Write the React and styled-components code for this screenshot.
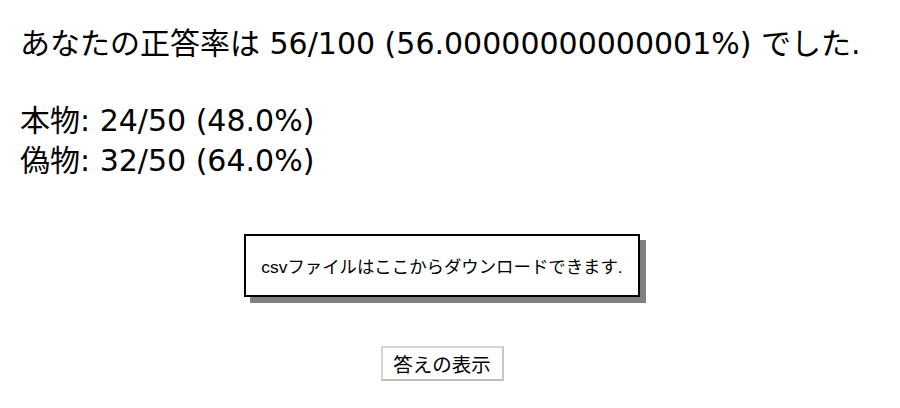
import React from "react";
import styled, { createGlobalStyle } from "styled-components";

const Global = createGlobalStyle`
  html, body { margin: 0; padding: 0; background: #fff; }
  body { font-family: "DejaVu Sans", "Noto Sans CJK JP", sans-serif; color: #000; }
`;

const Page = styled.div`
  width: 884px;
  padding: 24px 0 0 20px;
  box-sizing: border-box;
`;

const Score = styled.p`
  margin: 0;
  font-size: 30px;
  line-height: 40px;
  white-space: nowrap;
`;

const Breakdown = styled.div`
  margin-top: 37px;
  font-size: 30px;
  line-height: 40px;
`;

const Line = styled.div``;

const Center = styled.div`
  display: flex;
  flex-direction: column;
  align-items: center;
  margin-left: -20px;
`;

const DownloadBox = styled.a`
  margin-top: 53px;
  width: 396px;
  height: 63px;
  box-sizing: border-box;
  border: 2px solid #000;
  box-shadow: 6px 6px 0 #808080;
  display: flex;
  align-items: center;
  justify-content: center;
  font-family: "Liberation Sans", "Noto Sans CJK JP", sans-serif;
  font-size: 17.4px;
  color: #000;
  text-decoration: none;
  background: #fff;
  white-space: nowrap;
`;

const ShowButton = styled.button`
  margin-top: 49px;
  width: 123px;
  height: 35px;
  box-sizing: border-box;
  border: 2px solid #d4d4d4;
  border-bottom-color: #bdbdbd;
  border-right-color: #c8c8c8;
  background: #fff;
  font-family: "Noto Sans CJK JP", sans-serif;
  font-size: 19.5px;
  line-height: 1;
  color: #000;
  padding: 0;
`;

export default function App() {
  return (
    <>
      <Global />
      <Page>
        <Score>あなたの正答率は 56/100 (56.00000000000001%) でした.</Score>
        <Breakdown>
          <Line>本物: 24/50 (48.0%)</Line>
          <Line>偽物: 32/50 (64.0%)</Line>
        </Breakdown>
        <Center>
          <DownloadBox href="#">csvファイルはここからダウンロードできます.</DownloadBox>
          <ShowButton>答えの表示</ShowButton>
        </Center>
      </Page>
    </>
  );
}
